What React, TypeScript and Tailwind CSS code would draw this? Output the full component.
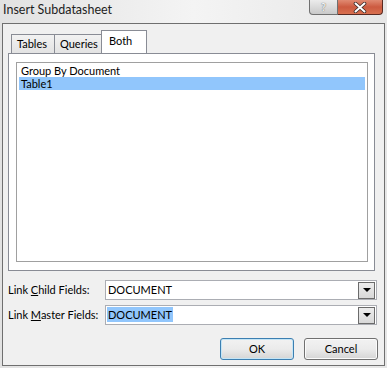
import React from "react";

const font = { fontFamily: "Lato, 'Liberation Sans', sans-serif" };

const Tab = ({ label, w, active }: { label: string; w: string; active?: boolean }) => (
  <div
    className={
      active
        ? `relative z-10 -mb-px h-[23px] ${w} border border-b-0 border-[#898c95] bg-white pl-[7px] pt-[2px]`
        : `-mr-px mt-[4px] h-[19px] ${w} border border-b-0 border-[#898c95] bg-gradient-to-b from-[#f2f2f2] to-[#e3e3e3] pl-[5px] pt-[1px]`
    }
  >
    {label}
  </div>
);

const Combo = ({ value, selected }: { value: string; selected?: boolean }) => (
  <div className="flex h-[20px] w-[272px] shrink-0 items-center border border-[#abadb3] bg-white pr-[1px]">
    <div className="flex-1 pl-[1px]">
      <span className={selected ? "bg-[#91c6fc] px-[1px] py-[1px]" : "px-[1px]"}>{value}</span>
    </div>
    <div className="flex h-[17px] w-[17px] items-center justify-center border border-[#6b6b6b] bg-gradient-to-b from-[#ececec] to-[#d8d8d8]">
      <svg width="8" height="4" viewBox="0 0 8 4">
        <path d="M0 0h8L4 4z" fill="#000" />
      </svg>
    </div>
  </div>
);

export default function App() {
  return (
    <div
      className="h-[368px] w-[387px] overflow-hidden bg-gradient-to-r from-[#e2e2e2] via-[#f4f4f4] to-[#e6e6e6] text-[11px] leading-[16px] text-black"
      style={font}
    >
      {/* title bar */}
      <div className="flex h-[23px] items-start">
        <div className="whitespace-nowrap pl-[3px] pt-[2px] text-[12.5px] text-[#1e1e1e]">Insert Subdatasheet</div>
        <div className="ml-auto mr-[4px] flex">
          <div className="flex h-[15px] w-[29px] items-center justify-center rounded-bl-[4px] border border-t-0 border-[#707070] bg-gradient-to-b from-[#ececec] to-[#c9c9c9] text-[11px] font-bold text-[#f4f4f4] [text-shadow:0_0_1px_#333]">
            ?
          </div>
          <div className="flex h-[15px] w-[45px] items-center justify-center rounded-br-[4px] border border-l-0 border-t-0 border-[#5a2a22] bg-gradient-to-b from-[#e08a72] via-[#cc5a40] to-[#d8704f]">
            <svg width="14" height="11" viewBox="0 0 14 11">
              <path d="M2.5 1.5l9 8M11.5 1.5l-9 8" stroke="#3a2a28" strokeWidth="3.6" strokeLinecap="round" />
              <path d="M2.5 1.5l9 8M11.5 1.5l-9 8" stroke="#fff" strokeWidth="2" strokeLinecap="round" />
            </svg>
          </div>
        </div>
      </div>

      {/* client area */}
      <div className="ml-[2px] h-[343px] w-[383px] border border-[#6f6f6f] bg-[#f0f0f0]">
        <div className="ml-[8px] mt-[6px] flex items-start whitespace-nowrap">
          <Tab label="Tables" w="w-[44px]" />
          <Tab label="Queries" w="w-[48px]" />
          <Tab label="Both" w="w-[46px]" active />
        </div>

        <div className="ml-[5px] h-[218px] w-[367px] border border-[#898c95] bg-white pl-[7px] pt-[8px]">
          <div className="h-[200px] w-[352px] border border-[#a0a0a0] bg-white px-[2px] pt-[1px] leading-[13px]">
            <div className="h-[13px] pl-[2px]">Group By Document</div>
            <div className="h-[13px] bg-[#91c6fc] pl-[2px]">Table1</div>
          </div>
        </div>

        <div className="mt-[9px] flex flex-col gap-[5px] whitespace-nowrap">
          <div className="flex items-center">
            <div className="w-[102px] shrink-0 pl-[5px]">
              Link <span className="underline">C</span>hild Fields:
            </div>
            <Combo value="DOCUMENT" />
          </div>
          <div className="flex items-center">
            <div className="w-[102px] shrink-0 pl-[5px]">
              Link <span className="underline">M</span>aster Fields:
            </div>
            <Combo value="DOCUMENT" selected />
          </div>
        </div>

        <div className="mr-[6px] mt-[13px] flex justify-end gap-[10px]">
          <button className="h-[22px] w-[74px] rounded-[3px] border border-[#3c7fb1] bg-gradient-to-b from-[#f2f2f2] via-[#ebebeb] to-[#d5d5d5] shadow-[inset_0_0_0_1px_#c4e5f6]">
            OK
          </button>
          <button className="h-[22px] w-[74px] rounded-[3px] border border-[#707070] bg-gradient-to-b from-[#f2f2f2] via-[#ebebeb] to-[#d5d5d5] shadow-[inset_0_0_0_1px_#fbfbfb]">
            Cancel
          </button>
        </div>
      </div>
    </div>
  );
}
